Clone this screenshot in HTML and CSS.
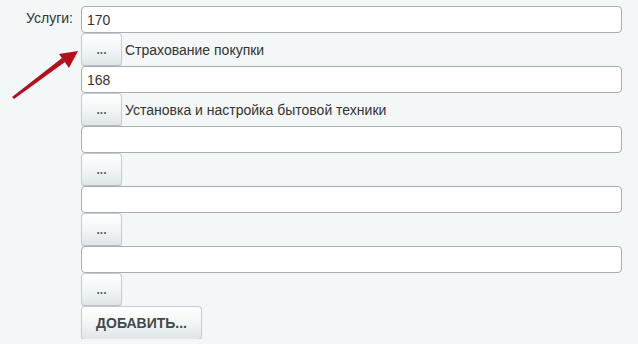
FILE: index.html
```html
<!DOCTYPE html>
<html>
<head>
<meta charset="utf-8">
<link rel="stylesheet" href="styles.css">
</head>
<body>
<div class="form">
  <div class="label">Услуги:</div>
  <div class="fields">
    <input class="inp" type="text" value="170">
    <div class="row"><button class="btn">...</button><span class="name">Страхование покупки</span></div>
    <input class="inp" type="text" value="168">
    <div class="row"><button class="btn">...</button><span class="name">Установка и настройка бытовой техники</span></div>
    <input class="inp" type="text" value="">
    <div class="row"><button class="btn">...</button></div>
    <input class="inp" type="text" value="">
    <div class="row"><button class="btn">...</button></div>
    <input class="inp" type="text" value="">
    <div class="row"><button class="btn">...</button></div>
    <div class="row"><button class="btn add">ДОБАВИТЬ...</button></div>
  </div>
</div>
<svg class="arrow" width="90" height="110" viewBox="0 0 90 110">
  <polygon points="12,97 14,99 65,62 62,58" fill="#b3101c"/>
  <polygon points="78,51 59,54 69,68" fill="#b3101c"/>
</svg>
</body>
</html>
```
FILE: styles.css
```css
html, body {
  margin: 0;
  padding: 0;
  background: #f4f7f8;
  font-family: Arial, "Liberation Sans", sans-serif;
  font-size: 14px;
  color: #333;
  overflow: hidden;
}
.form {
  display: flex;
  padding-top: 6px;
}
.label {
  flex: none;
  box-sizing: border-box;
  width: 81px;
  text-align: right;
  padding-top: 4px;
  padding-right: 8px;
  line-height: 16px;
  color: #333;
}
.fields {
  width: 541px;
  display: flex;
  flex-direction: column;
}
.inp {
  box-sizing: border-box;
  width: 541px;
  height: 27px;
  margin: 0;
  border: 1px solid #a8adb0;
  border-radius: 4px;
  background: #fff;
  padding: 0 5px;
  font-family: Arial, "Liberation Sans", sans-serif;
  font-size: 14px;
  color: #333;
  outline: none;
}
.row {
  display: flex;
  align-items: center;
  height: 33px;
}
.btn {
  box-sizing: border-box;
  width: 41px;
  height: 33px;
  margin: 0;
  padding: 0;
  border: 1px solid #c6ccd0;
  border-bottom-color: #b9c0c4;
  border-radius: 4px;
  background: linear-gradient(#ffffff, #f1f4f5 55%, #dfe5e8);
  box-shadow: 0 1px 1px rgba(0,0,0,0.12);
  font-family: Arial, "Liberation Sans", sans-serif;
  font-size: 12px;
  font-weight: bold;
  color: #5a5f63;
  line-height: 1;
}
.name {
  margin-left: 3px;
  color: #333;
}
.add {
  width: 121px;
  height: 34px;
  margin-top: 1px;
  font-size: 14px;
  color: #43484c;
}
.arrow {
  position: absolute;
  left: 0;
  top: 0;
}
```
